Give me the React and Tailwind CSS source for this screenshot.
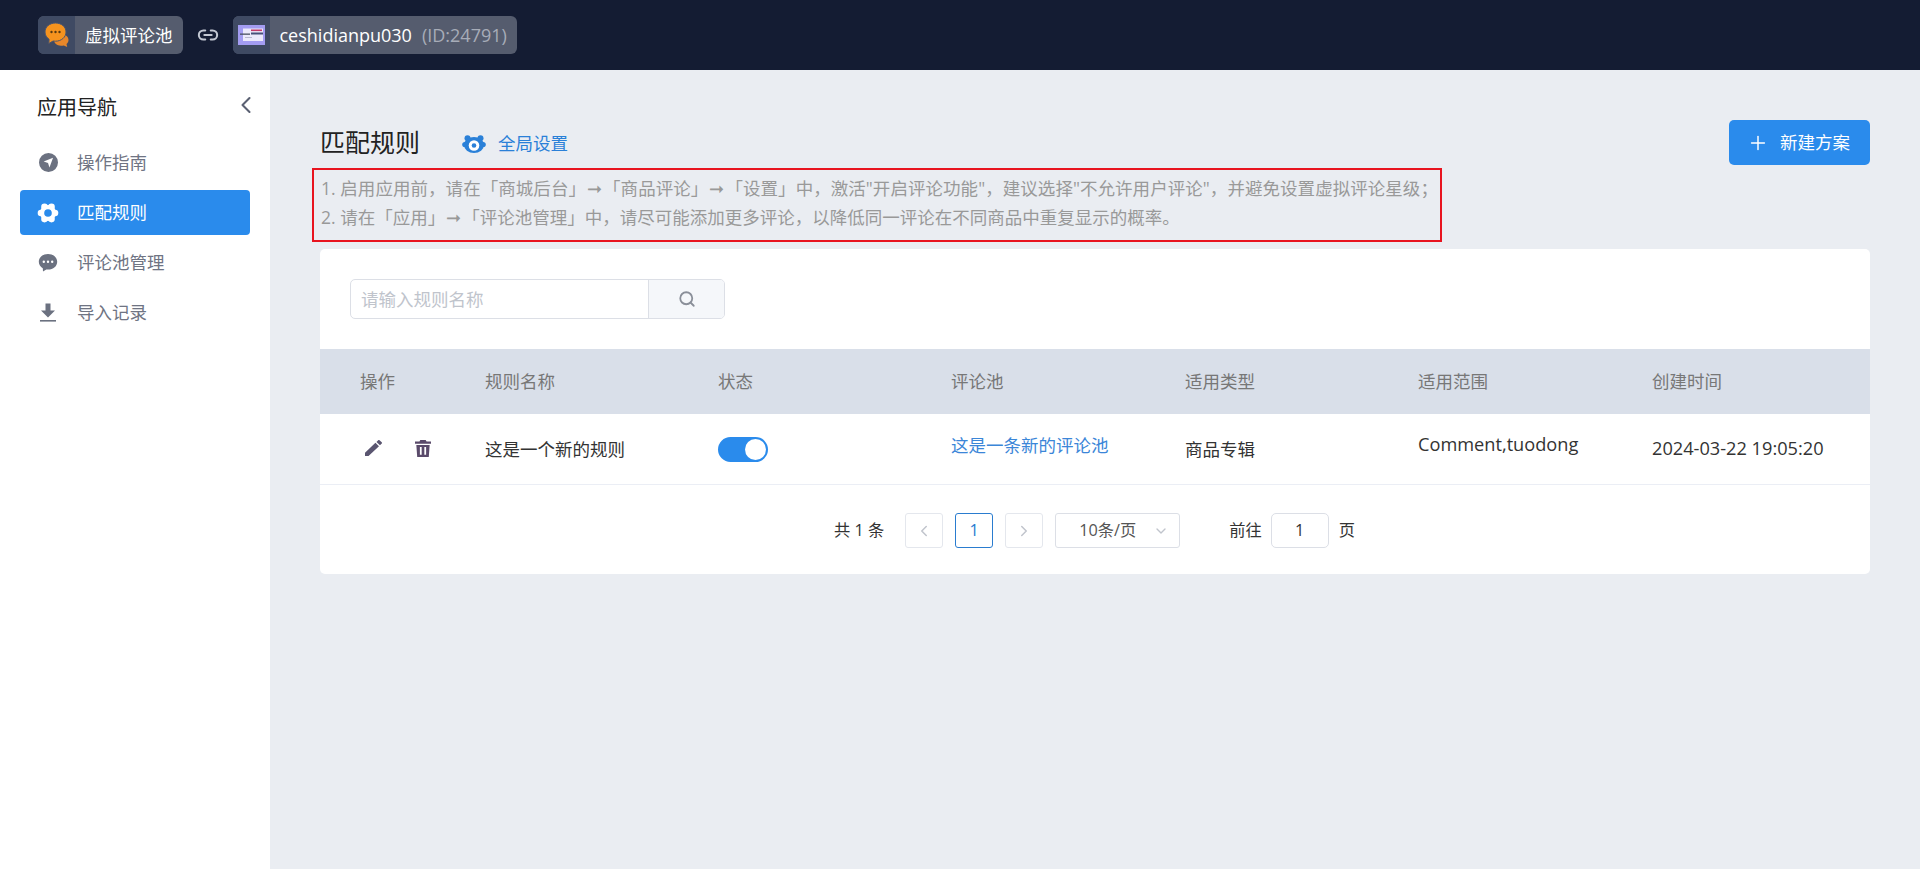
import React from "react";
import { ChevronLeft, ChevronRight, ChevronDown, Search, Plus, Link2 } from "lucide-react";

const FONT = "font-['Open_Sans','Noto_Sans_CJK_SC',sans-serif]";

function Nav({ icon, label, active }) {
  return (
    <div className={`flex h-[45px] items-center rounded-[4px] pl-[17px] ${active ? "bg-[#2a8bec] text-white" : "text-[#6f7483]"}`}>
      <span className="flex w-[22px] justify-center">{icon}</span>
      <span className="ml-[18px] text-[17.5px]">{label}</span>
    </div>
  );
}

const Compass = () => (
  <svg width="19" height="19" viewBox="0 0 20 20" fill="#6b7180">
    <path fillRule="evenodd" d="M10 0a10 10 0 1 0 0 20a10 10 0 0 0 0-20ZM14.800 5 11 15.200l-1.500-4.700L4.900 9Z" />
  </svg>
);
const Gear = () => (
  <svg width="22" height="22" viewBox="0 0 22 22">
    <g fill="#fff">
      <circle cx="11" cy="11" r="8" />
      <circle cx="18" cy="11" r="3.300" />
      <circle cx="4" cy="11" r="3.300" />
      <circle cx="14.500" cy="4.900" r="3.300" />
      <circle cx="7.500" cy="4.900" r="3.300" />
      <circle cx="14.500" cy="17.100" r="3.300" />
      <circle cx="7.500" cy="17.100" r="3.300" />
    </g>
    <circle cx="11" cy="11" r="3.800" fill="#2a8bec" />
  </svg>
);
const Bubble = () => (
  <svg width="20" height="20" viewBox="0 0 20 20" fill="#6b7180">
    <path fillRule="evenodd" d="M10 1C4.600 1 .8 4.400.8 8.800c0 2.900 1.600 5.200 4 6.500l.2 3.200 3.300-2c.6.1 1.100.1 1.700.1 5.400 0 9.200-3.400 9.200-7.800S15.400 1 10 1ZM5.800 7.600a1.200 1.200 0 1 1 0 2.400a1.200 1.200 0 0 1 0-2.400Zm4.200 0a1.200 1.200 0 1 1 0 2.400a1.200 1.200 0 0 1 0-2.400Zm4.200 0a1.200 1.200 0 1 1 0 2.400a1.200 1.200 0 0 1 0-2.400Z" />
  </svg>
);
const Download = () => (
  <svg width="20" height="22" viewBox="0 0 20 22" fill="#6b7180">
    <path d="M7.500 1.500h5v7h4.500L10 15.500 3 8.500h4.500Z" />
    <rect x="2" y="18" width="16" height="1.600" />
  </svg>
);
const ChatOrange = () => (
  <svg width="26" height="26" viewBox="0 0 26 26">
    <path fill="#e8872a" d="M17 12c4 0 7.500 2.500 7.500 6 0 1.700-.8 3-2 4l.7 3-3.400-1.600c-.9.2-1.800.3-2.800.3-4 0-7-2.500-7-5.700s3-6 7-6Z" />
    <path fill="#f6931e" stroke="#4a5570" strokeWidth="1" d="M11.500 1C5.700 1 1 4.800 1 10c0 3 1.600 5.600 4.100 7.300l-.3 4.200 4.300-2.500c.8.100 1.600.2 2.400.2 5.800 0 10.500-4 10.500-9.200S17.300 1 11.500 1Z" />
    <circle cx="7.500" cy="10" r="1.200" fill="#5a3a10" />
    <circle cx="11.500" cy="10" r="1.200" fill="#5a3a10" />
    <circle cx="15.500" cy="10" r="1.200" fill="#5a3a10" />
  </svg>
);
const StoreThumb = () => (
  <svg width="27" height="20" viewBox="0 0 27 20">
    <rect width="27" height="20" fill="#a39cf2" />
    <rect x="5" y="3.500" width="20" height="12.500" fill="#ece9fb" />
    <rect x="13" y="4.500" width="11" height="1.600" fill="#c2396b" />
    <rect x="13" y="7.500" width="12" height="2" fill="#47507a" />
    <rect x="2" y="8.500" width="10" height="1.300" fill="#4a5060" />
    <rect x="7" y="12" width="7" height="1" fill="#b9b9d0" />
  </svg>
);
const Eye = () => (
  <svg width="24" height="18" viewBox="0 0 24 18">
    <g fill="#2a80d8">
      <circle cx="5.500" cy="3.300" r="3" />
      <circle cx="18.500" cy="3.300" r="3" />
      <ellipse cx="12" cy="10" rx="10" ry="8" />
      <circle cx="2.800" cy="9.500" r="2.600" />
      <circle cx="21.200" cy="9.500" r="2.600" />
    </g>
    <circle cx="12" cy="10.500" r="5.300" fill="#fff" />
    <circle cx="12" cy="10.500" r="2.300" fill="#2a80d8" />
  </svg>
);
const Pencil = () => (
  <svg width="17" height="16" viewBox="3 3 18 18" preserveAspectRatio="none" fill="#5a5570">
    <path d="M3 17.250V21h3.750L17.810 9.940l-3.750-3.750L3 17.250ZM20.710 7.040a1 1 0 0 0 0-1.410l-2.340-2.340a1 1 0 0 0-1.410 0l-1.830 1.830 3.750 3.750 1.830-1.830Z" />
  </svg>
);
const Trash = () => (
  <svg width="16" height="17" viewBox="3 1 18 22" preserveAspectRatio="none" fill="#5a4a6a">
    <path fillRule="evenodd" d="M9 1h6l1 2h5v3H3V3h5ZM4.500 7.500h15L18.500 23h-13ZM8.500 10v10h2V10Zm5 0v10h2V10Z" />
  </svg>
);
const Arrow = () => <span className="px-[1px]">➞</span>;

const COLS = "grid grid-cols-[165px_233px_233px_234px_233px_234px_1fr]";
const HEAD = ["操作", "规则名称", "状态", "评论池", "适用类型", "适用范围", "创建时间"];

export default function App() {
  return (
    <div className={`${FONT} h-[869px] w-[1920px] overflow-hidden bg-[#eaedf2] text-[17.5px] text-[#333]`}>
      <header className="flex h-[70px] items-center bg-[#141c33] pl-[38px]">
        <div className="flex h-[38px] overflow-hidden rounded-[6px] bg-[#555c6e]">
          <div className="flex w-[37px] items-center justify-center bg-[#3f4a63]"><ChatOrange /></div>
          <div className="flex items-center pl-[10px] pr-[10px] text-[17.5px] text-white">虚拟评论池</div>
        </div>
        <Link2 className="mx-[14px] text-[#c3c8d3]" size={22} strokeWidth={2.200} />
        <div className="flex h-[38px] w-[284px] overflow-hidden rounded-[6px] bg-[#555c6e]">
          <div className="flex w-[37px] items-center justify-center bg-[#3f4a63]"><StoreThumb /></div>
          <div className="flex items-center whitespace-nowrap pl-[10px] text-[18px] text-white">
            ceshidianpu030<span className="ml-[10px] text-[18px] text-[#a7acb8]">(ID:24791)</span>
          </div>
        </div>
      </header>

      <div className="flex h-[799px]">
        <aside className="w-[270px] shrink-0 bg-white px-[20px]">
          <div className="flex h-[70px] items-center justify-between pl-[17px]">
            <span className="mt-[6px] text-[20px] text-[#222]">应用导航</span>
            <ChevronLeft className="mr-[-10px] text-[#5a6072]" size={28} strokeWidth={1.800} />
          </div>
          <nav className="flex flex-col gap-[5px]">
            <Nav icon={<Compass />} label="操作指南" />
            <Nav icon={<Gear />} label="匹配规则" active />
            <Nav icon={<Bubble />} label="评论池管理" />
            <Nav icon={<Download />} label="导入记录" />
          </nav>
        </aside>

        <main className="w-[1650px] pl-[50px] pr-[50px] pt-[50px]">
          <div className="flex h-[45px] items-center justify-between">
            <div className="flex items-center">
              <h1 className="text-[25px] font-normal text-[#222]">匹配规则</h1>
              <span className="ml-[42px] mt-[2px]"><Eye /></span>
              <span className="ml-[12px] mt-[2px] text-[17.5px] text-[#2a80d8]">全局设置</span>
            </div>
            <button className="flex h-[45px] w-[141px] items-center justify-center rounded-[5px] bg-[#2a8bec] pr-[2px] text-[17.5px] text-white">
              <Plus size={22} strokeWidth={1.600} className="mr-[11px]" />新建方案
            </button>
          </div>

          <div className="ml-[-8px] mt-[3px] h-[74px] w-[1130px] border-2 border-[#e8141f] pl-[7px] pt-[4px] text-[17.5px] leading-[29px] text-[#999]">
            <p className="whitespace-nowrap tracking-[0.05px]">1. 启用应用前，请在「商城后台」<Arrow />「商品评论」<Arrow />「设置」中，激活"开启评论功能"，建议选择"不允许用户评论"，并避免设置虚拟评论星级；</p>
            <p className="whitespace-nowrap">2. 请在「应用」<Arrow />「评论池管理」中，请尽可能添加更多评论，以降低同一评论在不同商品中重复显示的概率。</p>
          </div>

          <section className="mt-[7px] h-[325px] rounded-[5px] bg-white pt-[30px]">
            <div className="ml-[30px] flex h-[40px] w-[375px] overflow-hidden rounded-[5px] border border-[#dcdfe6]">
              <div className="flex w-[298px] items-center border-r border-[#dcdfe6] pl-[10px] text-[#c0c4cc]">请输入规则名称</div>
              <div className="flex flex-1 items-center justify-center bg-[#f5f7fa]"><Search size={18} strokeWidth={2.400} className="text-[#8a8f99]" /></div>
            </div>

            <div className={`${COLS} mt-[30px] h-[65px] items-center bg-[#d9dfe9] text-[#777]`}>
              {HEAD.map((h, i) => <div key={h} className={i === 0 ? "pl-[40px]" : ""}>{h}</div>)}
            </div>

            <div className={`${COLS} h-[71px] items-center border-b border-[#ebeef5]`}>
              <div className="mt-[-2px] flex items-center gap-[33px] pl-[45px]"><Pencil /><Trash /></div>
              <div>这是一个新的规则</div>
              <div>
                <span className="flex h-[25px] w-[50px] items-center justify-end rounded-full bg-[#2a8bec] pr-[2px]">
                  <span className="h-[21px] w-[21px] rounded-full bg-white" />
                </span>
              </div>
              <div className="mt-[-8px] text-[#3b86d8]">这是一条新的评论池</div>
              <div>商品专辑</div>
              <div className="mt-[-8px] text-[18.200px]">Comment,tuodong</div>
              <div className="text-[18.200px]">2024-03-22 19:05:20</div>
            </div>

            <div className="mt-[28px] flex h-[35px] items-center pl-[514px] text-[16.250px]">
              <span>共 1 条</span>
              <span className="ml-[21px] flex h-[35px] w-[38px] items-center justify-center rounded-[3px] border border-[#e4e7ed] text-[#c0c4cc]"><ChevronLeft size={18} /></span>
              <span className="ml-[12px] flex h-[35px] w-[38px] items-center justify-center rounded-[3px] border border-[#2a7ccf] text-[#2a7ccf]">1</span>
              <span className="ml-[12px] flex h-[35px] w-[38px] items-center justify-center rounded-[3px] border border-[#e4e7ed] text-[#c0c4cc]"><ChevronRight size={18} /></span>
              <span className="ml-[12px] flex h-[35px] w-[125px] items-center justify-between rounded-[3px] border border-[#dcdfe6] pl-[23px] pr-[10px] text-[#555]">10条/页<ChevronDown size={16} className="text-[#c0c4cc]" /></span>
              <span className="ml-[49px]">前往</span>
              <span className="ml-[9px] flex h-[35px] w-[58px] items-center justify-center rounded-[5px] border border-[#dcdfe6]">1</span>
              <span className="ml-[10px]">页</span>
            </div>
          </section>
        </main>
      </div>
    </div>
  );
}
